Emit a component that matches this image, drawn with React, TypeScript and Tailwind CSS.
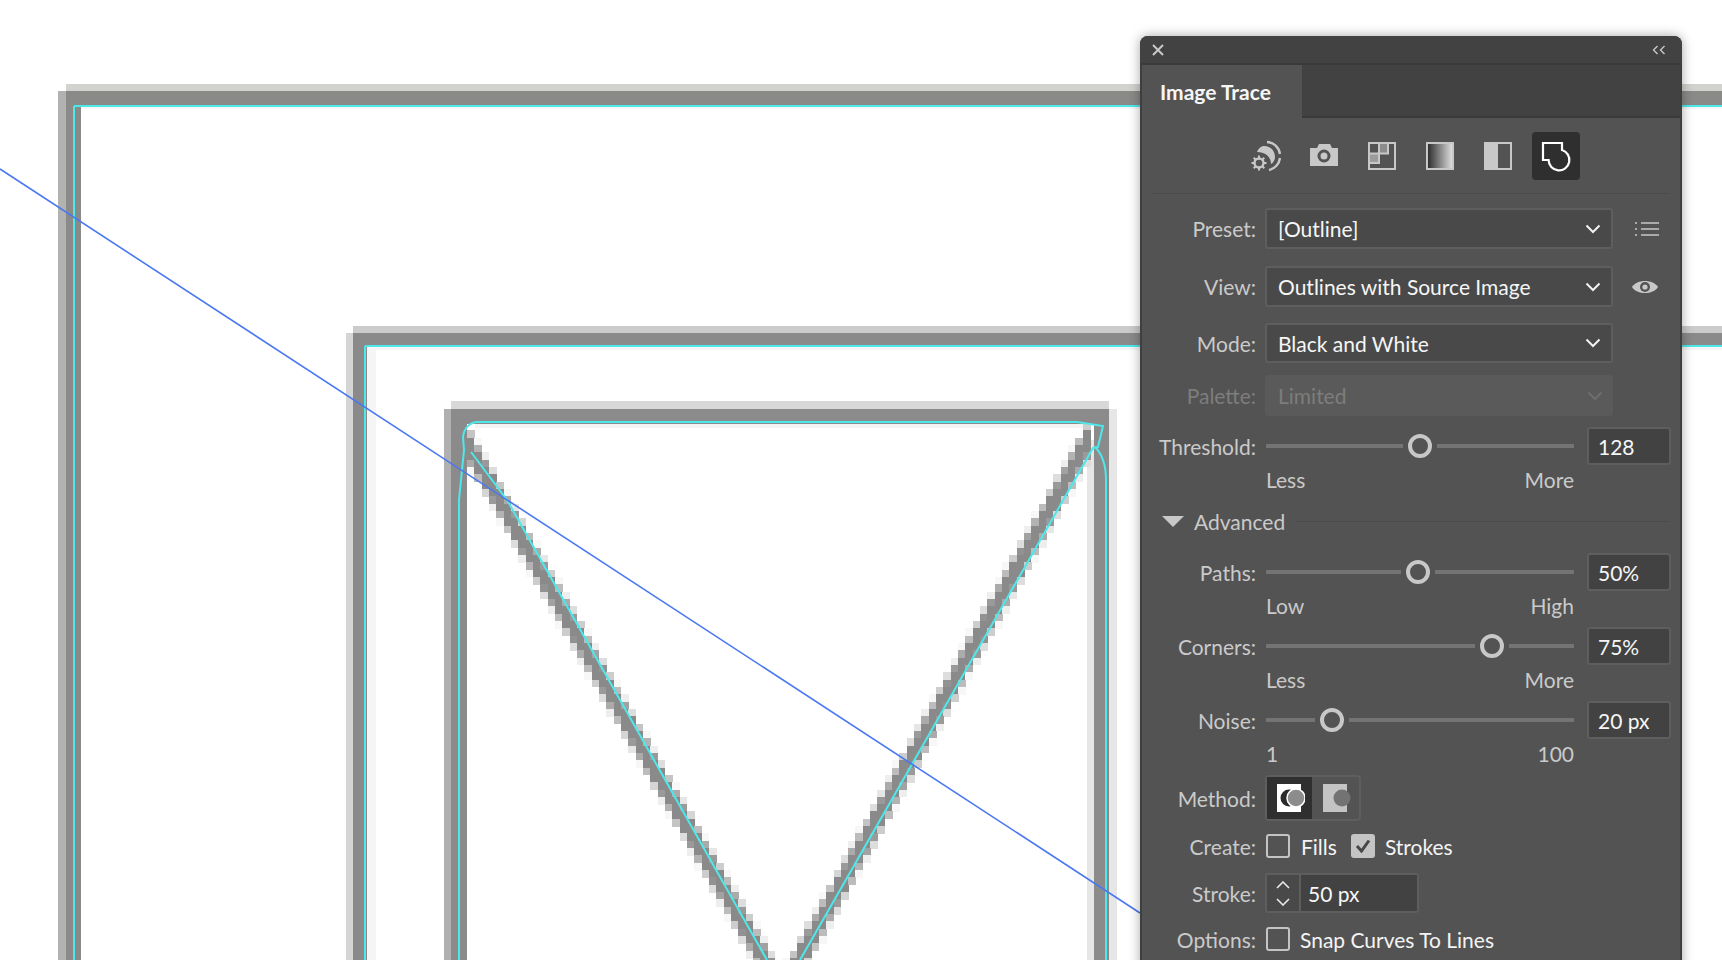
import React from "react";

// Pixelated artwork under the panel, one source pixel = 7.33px
const CELL = 7.33;
const DARK = [138, 138, 138];

const leftBand = (y: number) => 764 - (960 - y) * 0.575;
const rightBand = (y: number) => 799 + (960 - y) * 0.557;

function cellColor(cx: number, cy: number) {
  let hits = 0;
  for (let a = 0; a < 4; a++) {
    for (let b = 0; b < 4; b++) {
      const sx = cx + ((a + 0.5) / 4) * CELL;
      const sy = cy + ((b + 0.5) / 4) * CELL;
      if (Math.abs(sx - leftBand(sy)) < 8.5 || Math.abs(sx - rightBand(sy)) < 8.5) hits++;
    }
  }
  if (hits === 0) return null;
  const k = hits / 16;
  const v = Math.round(255 + (DARK[0] - 255) * Math.min(1, k * 1.15));
  return `rgb(${v},${v},${v})`;
}

const cells: { x: number; y: number; fill: string }[] = [];
for (let j = 0; j < 75; j++) {
  for (let i = 0; i < 90; i++) {
    const x = 467 + i * CELL;
    const y = 423 + j * CELL;
    if (x > 1090) continue;
    const fill = cellColor(x, y);
    if (fill) cells.push({ x, y, fill });
  }
}

const Artwork = () => (
  <svg className="absolute inset-0" width={1722} height={960} viewBox="0 0 1722 960">
    <g shapeRendering="crispEdges">
      {/* outer frame */}
      <rect x="66" y="84" width="1656" height="7" fill="#d2d2ce" />
      <rect x="58" y="91" width="8" height="869" fill="#b2b2b0" />
      <rect x="66" y="91" width="1656" height="15" fill="#8a8a88" />
      <rect x="66" y="91" width="15" height="869" fill="#8a8a88" />
      <rect x="81" y="107" width="1641" height="2" fill="#f6f6f6" />
      {/* middle frame */}
      <rect x="353" y="326" width="1369" height="7" fill="#cbcbcb" />
      <rect x="346" y="333" width="7" height="627" fill="#d5d5d5" />
      <rect x="353" y="333" width="1369" height="14" fill="#8a8a8a" />
      <rect x="353" y="333" width="14" height="627" fill="#8a8a8a" />
      <rect x="367" y="347" width="9" height="613" fill="#f5f5f5" />
      <rect x="367" y="347" width="1355" height="3" fill="#f5f5f5" />
      {/* inner frame */}
      <rect x="451" y="401" width="658" height="8" fill="#d8d8d8" />
      <rect x="444" y="409" width="7" height="551" fill="#b0b0b0" />
      <rect x="1109" y="409" width="8" height="551" fill="#e6e6e6" />
      <rect x="451" y="409" width="658" height="15" fill="#8b8b8b" />
      <rect x="451" y="409" width="16" height="551" fill="#8b8b8b" />
      <rect x="1094" y="409" width="15" height="551" fill="#8b8b8b" />
      <rect x="1087" y="440" width="7" height="520" fill="#e6e6e6" />
      <rect x="475" y="424" width="612" height="4" fill="#f4f4f4" />
      {cells.map((c, i) => (
        <rect key={i} x={c.x} y={c.y} width={CELL + 0.5} height={CELL + 0.5} fill={c.fill} />
      ))}
    </g>
    <g fill="none" stroke="#4ee8ea" strokeWidth="2">
      <path d="M0 106 H1722" transform="translate(74 0) scale(0.96 1)" />
      <path d="M74 106 V960" />
      <path d="M365 346 H1722 M365 346 V960" />
      <path d="M459 960 L459 500 L464 450 L463 437 C464 428 470 422 478 422 H1077 L1103 426 L1098 447 L1093 448 L800 960" />
      <path d="M1095 447 C1103 455 1106 468 1106 480 V960" />
      <path d="M471 452 L507 500 L767 960" />
    </g>
    <path d="M0 169 L1140 913" fill="none" stroke="#4a78f0" strokeWidth="1.6" />
  </svg>
);

const Label = ({ children, dim }: { children: React.ReactNode; dim?: boolean }) => (
  <div className={`w-[114px] shrink-0 text-right ${dim ? "text-[#7d7d7d]" : "text-[#cacaca]"}`}>{children}</div>
);

const Chevron = ({ dim }: { dim?: boolean }) => (
  <svg width="16" height="10" viewBox="0 0 16 10" className="ml-auto mr-[10px]">
    <path d="M1.5 1.5 L8 8 L14.5 1.5" fill="none" stroke={dim ? "#6e6e6e" : "#f2f2f2"} strokeWidth="2" />
  </svg>
);

const SelectRow = ({
  label,
  value,
  className,
  icon,
}: {
  label: string;
  value: string;
  className: string;
  icon?: React.ReactNode;
}) => (
  <div className={`flex items-center ${className}`}>
    <Label>{label}</Label>
    <div className="ml-[9px] flex h-full w-[348px] items-center rounded-[3px] border-2 border-[#5e5e5e] bg-[#494949] pl-[11px] text-[#f6f6f6]">
      {value}
      <Chevron />
    </div>
    {icon}
  </div>
);

const SliderRow = ({
  label,
  thumb,
  value,
  className,
}: {
  label: string;
  thumb: number;
  value: string;
  className: string;
}) => (
  <div className={`flex h-[38px] items-center ${className}`}>
    <Label>{label}</Label>
    <div className="ml-[10px] flex w-[308px] items-center">
      <div className="h-[4px] bg-[#747474]" style={{ width: thumb - 17 }} />
      <div className="mx-[5px] h-[24px] w-[24px] shrink-0 rounded-full border-[4px] border-[#c8c8c8]" />
      <div className="h-[4px] flex-1 bg-[#747474]" />
    </div>
    <div className="ml-[13px] flex h-full w-[84px] items-center rounded-[3px] border-2 border-[#5e5e5e] bg-[#424242] pl-[9px] text-[#f6f6f6]">
      {value}
    </div>
  </div>
);

const Hints = ({ left, right }: { left: string; right: string }) => (
  <div className="ml-[124px] flex h-[28px] w-[308px] items-center justify-between text-[#cacaca]">
    <span>{left}</span>
    <span>{right}</span>
  </div>
);

const Checkbox = ({ checked }: { checked?: boolean }) =>
  checked ? (
    <div className="flex h-[24px] w-[24px] shrink-0 items-center justify-center rounded-[3px] bg-[#c4c4c4]">
      <svg width="16" height="14" viewBox="0 0 16 14">
        <path d="M2 7 L6.5 12 L14 1.5" fill="none" stroke="#484848" strokeWidth="3" />
      </svg>
    </div>
  ) : (
    <div className="h-[24px] w-[24px] shrink-0 rounded-[3px] border-2 border-[#c4c4c4]" />
  );

const G = "#c8c8c8";

const ToolIcons = [
  <svg key="auto" width="48" height="48" viewBox="0 0 48 48">
    <path d="M21 14 C28 13 33 19 33 25 C33 28 31 31 29 32 C29 25 24 20 15 20 C16 17 18 15 21 14 Z" fill={G} />
    <path d="M25 10 A14 14 0 0 1 38 22 M38 26 A14 14 0 0 1 27 38" fill="none" stroke={G} strokeWidth="2.4" />
    <circle cx="17" cy="31" r="4.5" fill="none" stroke={G} strokeWidth="2.4" />
    <path d="M17 23.5 V27 M17 35 V38.5 M9.5 31 H13 M21 31 H24.5 M11.7 25.7 L14 28 M20 34 L22.3 36.3 M22.3 25.7 L20 28 M14 34 L11.7 36.3" stroke={G} strokeWidth="2" />
  </svg>,
  <svg key="camera" width="48" height="48" viewBox="0 0 48 48">
    <path d="M10 16 H17 L19 12 H30 L32 16 H38 V34 H10 Z" fill={G} />
    <circle cx="24" cy="24" r="5" fill="none" stroke="#535353" strokeWidth="3" />
  </svg>,
  <svg key="grid" width="48" height="48" viewBox="0 0 48 48">
    <rect x="11" y="11" width="26" height="26" fill="none" stroke={G} strokeWidth="2" />
    <rect x="12" y="22" width="9" height="9" fill="#9c9c9c" />
    <rect x="21" y="12" width="9" height="9" fill="#8c8c8c" />
    <path d="M21 11 V31 M30 11 V21 M11 21.5 H31 M11 31 H22" fill="none" stroke={G} strokeWidth="2" />
  </svg>,
  <svg key="gradient" width="48" height="48" viewBox="0 0 48 48">
    <defs>
      <linearGradient id="grey-ramp" x1="0" x2="1" y1="0" y2="0">
        <stop offset="0" stopColor="#282828" />
        <stop offset="1" stopColor="#e4e4e4" />
      </linearGradient>
    </defs>
    <rect x="11" y="11" width="26" height="26" fill="url(#grey-ramp)" stroke={G} strokeWidth="2" />
  </svg>,
  <svg key="half" width="48" height="48" viewBox="0 0 48 48">
    <rect x="11" y="11" width="13" height="26" fill={G} />
    <rect x="11" y="11" width="26" height="26" fill="none" stroke={G} strokeWidth="2" />
  </svg>,
  <svg key="outline" width="48" height="48" viewBox="0 0 48 48">
    <path d="M11 11 H30 V18 A10.4 10.4 0 1 1 16.6 28 H11 Z" fill="none" stroke="#fff" strokeWidth="2.2" />
  </svg>,
];

export default function App() {
  return (
    <div
      className="relative h-[960px] w-[1722px] overflow-hidden bg-white text-[21px] leading-none"
      style={{ fontFamily: "Lato, 'Open Sans', sans-serif" }}
    >
      <Artwork />

      {/* floating panel */}
      <div className="absolute left-[1140px] top-[36px] h-[940px] w-[542px] rounded-t-[8px] border-x-2 border-[#3f3f3f] bg-[#535353] shadow-[0_0_12px_rgba(0,0,0,0.35)]">
        <div className="-mx-[2px] flex h-[27px] items-center justify-between rounded-t-[8px] bg-[#424242] pl-[12px] pr-[16px]">
          <svg width="12" height="12" viewBox="0 0 12 12">
            <path d="M1 1 L11 11 M11 1 L1 11" stroke="#c8c8c8" strokeWidth="2" />
          </svg>
          <svg width="14" height="10" viewBox="0 0 14 10">
            <path d="M5.5 1 L1.5 5 L5.5 9 M12.5 1 L8.5 5 L12.5 9" fill="none" stroke="#c8c8c8" strokeWidth="1.4" />
          </svg>
        </div>

        <div className="flex h-[55px] border-b-2 border-t-2 border-[#3a3a3a] bg-[#424242]">
          <div className="-mb-[2px] flex w-[160px] items-center bg-[#535353] pl-[18px] font-bold text-[#f6f6f6]">
            Image Trace
          </div>
        </div>

        <div className="mt-[14px] flex h-[48px] gap-[10px] pl-[100px]">
          {ToolIcons.map((icon, i) => (
            <div key={i} className={`h-[48px] w-[48px] rounded-[4px] ${i === 5 ? "bg-[#2f2f2f]" : ""}`}>
              {icon}
            </div>
          ))}
        </div>

        <div className="mx-[10px] mt-[13px] h-px bg-[#4b4b4b]" />

        <SelectRow
          label="Preset:"
          value="[Outline]"
          className="mt-[14px] h-[41px]"
          icon={
            <svg width="26" height="16" viewBox="0 0 26 16" className="ml-[21px]">
              <path d="M1 2 H3 M1 8 H3 M1 14 H3 M7 2 H25 M7 8 H25 M7 14 H25" stroke={G} strokeWidth="1.6" />
            </svg>
          }
        />
        <SelectRow
          label="View:"
          value="Outlines with Source Image"
          className="mt-[17px] h-[41px]"
          icon={
            <svg width="26" height="18" viewBox="0 0 26 18" className="ml-[19px]">
              <path d="M0 9 C5 1 21 1 26 9 C21 17 5 17 0 9 Z" fill={G} />
              <circle cx="13" cy="9" r="5" fill="#535353" />
              <circle cx="13" cy="9" r="2.6" fill={G} />
            </svg>
          }
        />
        <SelectRow label="Mode:" value="Black and White" className="mt-[16px] h-[40px]" />

        <div className="mt-[12px] flex h-[41px] items-center">
          <Label dim>Palette:</Label>
          <div className="ml-[9px] flex h-full w-[348px] items-center rounded-[3px] bg-[#5a5a5a] pl-[13px] text-[#7d7d7d]">
            Limited
            <Chevron dim />
          </div>
        </div>

        <SliderRow label="Threshold:" thumb={154} value="128" className="mt-[11px]" />
        <Hints left="Less" right="More" />

        <div className="mt-[14px] flex h-[28px] items-center pl-[20px] text-[#cacaca]">
          <svg width="22" height="11" viewBox="0 0 22 11">
            <path d="M0 0 H22 L11 11 Z" fill={G} />
          </svg>
          <span className="ml-[10px]">Advanced</span>
          <div className="ml-[10px] mr-[10px] h-px flex-1 bg-[#4b4b4b]" />
        </div>

        <SliderRow label="Paths:" thumb={152} value="50%" className="mt-[18px]" />
        <Hints left="Low" right="High" />
        <SliderRow label="Corners:" thumb={226} value="75%" className="mt-[8px]" />
        <Hints left="Less" right="More" />
        <SliderRow label="Noise:" thumb={66} value="20 px" className="mt-[8px]" />
        <Hints left="1" right="100" />

        <div className="mt-[8px] flex h-[46px] items-center">
          <Label>Method:</Label>
          <div className="ml-[9px] flex h-full w-[96px] rounded-[4px] border-2 border-[#5e5e5e]">
            <div className="flex w-[45px] items-center justify-center bg-[#2f2f2f]">
              <svg width="30" height="28" viewBox="0 0 30 28">
                <rect x="2" y="0" width="24" height="28" fill="#fff" />
                <circle cx="14" cy="14" r="8.5" fill="#2a2a2a" />
                <circle cx="21" cy="14" r="9" fill="#8c8c8c" stroke="#fff" strokeWidth="1.5" />
              </svg>
            </div>
            <div className="flex flex-1 items-center justify-center">
              <svg width="30" height="28" viewBox="0 0 30 28">
                <rect x="2" y="0" width="24" height="28" fill="#c4c4c4" />
                <circle cx="21" cy="14" r="8.5" fill="#737373" />
              </svg>
            </div>
          </div>
        </div>

        <div className="mt-[13px] flex h-[24px] items-center text-[#f4f4f4]">
          <Label>Create:</Label>
          <div className="ml-[10px]">
            <Checkbox />
          </div>
          <span className="ml-[11px]">Fills</span>
          <div className="ml-[14px]">
            <Checkbox checked />
          </div>
          <span className="ml-[10px]">Strokes</span>
        </div>

        <div className="mt-[15px] flex h-[40px] items-center">
          <Label>Stroke:</Label>
          <div className="ml-[9px] flex h-full w-[154px] rounded-[3px] border-2 border-[#5e5e5e]">
            <div className="flex w-[34px] flex-col items-center justify-center gap-[9px] border-r-2 border-[#5e5e5e] bg-[#494949]">
              <svg width="14" height="8" viewBox="0 0 14 8">
                <path d="M1 7 L7 1 L13 7" fill="none" stroke="#e8e8e8" strokeWidth="1.6" />
              </svg>
              <svg width="14" height="8" viewBox="0 0 14 8">
                <path d="M1 1 L7 7 L13 1" fill="none" stroke="#e8e8e8" strokeWidth="1.6" />
              </svg>
            </div>
            <div className="flex flex-1 items-center bg-[#424242] pl-[7px] text-[#f6f6f6]">50 px</div>
          </div>
        </div>

        <div className="mt-[14px] flex h-[24px] items-center text-[#f4f4f4]">
          <Label>Options:</Label>
          <div className="ml-[10px]">
            <Checkbox />
          </div>
          <span className="ml-[10px]">Snap Curves To Lines</span>
        </div>
      </div>
    </div>
  );
}
